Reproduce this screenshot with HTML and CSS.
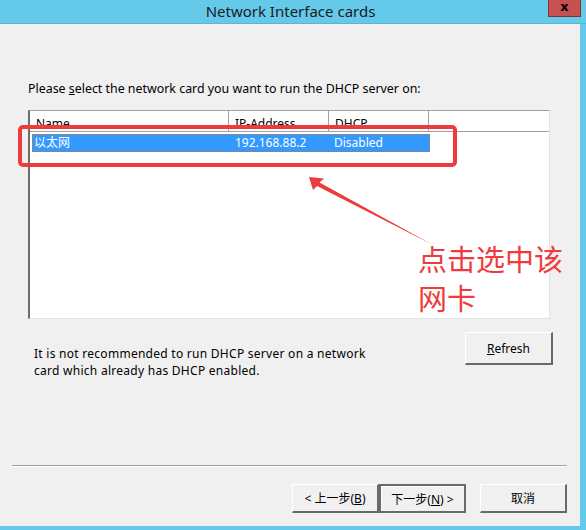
FILE: index.html
```html
<!DOCTYPE html>
<html>
<head>
<meta charset="utf-8">
<link rel="stylesheet" href="styles.css">
</head>
<body>
<div class="window">
  <div class="titlebar">
    <div class="title">Network Interface cards</div>
    <div class="close">x</div>
  </div>
  <div class="content">
    <p class="prompt">Please <u>s</u>elect the network card you want to run the DHCP server on:</p>
    <div class="listbox">
      <div class="lv-header">
        <div class="col c1">Name</div>
        <div class="col c2">IP-Address</div>
        <div class="col c3">DHCP</div>
        <div class="col c4"></div>
      </div>
      <div class="lv-row selected">
        <div class="cell c1 cjk">以太网</div>
        <div class="cell c2">192.168.88.2</div>
        <div class="cell c3">Disabled</div>
      </div>
    </div>
    <div class="info-row">
      <p class="note">It is not recommended to run DHCP server on a network<br>card which already has DHCP enabled.</p>
      <button class="btn refresh"><u>R</u>efresh</button>
    </div>
    <div class="separator"></div>
    <div class="nav">
      <button class="btn nav-btn cjk">&lt; 上一步(<u>B</u>)</button>
      <button class="btn nav-btn default cjk">下一步(<u>N</u>) &gt;</button>
      <button class="btn nav-btn cancel cjk">取消</button>
    </div>

    <div class="hl-box"></div>
    <svg class="arrow" width="586" height="530" viewBox="0 0 586 530">
      <polygon points="309,177 324,178.5 319.5,182.5 433,245 317,186 313,190" fill="#ef3b3b"/>
    </svg>
    <div class="annot cjk">点击选中该<br>网卡</div>
  </div>
</div>
</body>
</html>
```

FILE: styles.css
```css
* { box-sizing: border-box; }
html, body { margin: 0; padding: 0; }
body {
  width: 586px;
  height: 530px;
  background: #65c9ea;
  overflow: hidden;
  font-family: "Noto Sans", "Liberation Sans", sans-serif;
  font-size: 12px;
  color: #000;
}
.window { width: 586px; height: 530px; display: flex; flex-direction: column; }
.titlebar {
  height: 24px;
  position: relative;
  display: flex;
  justify-content: center;
  align-items: center;
  border-bottom: 1px solid #5ab6d4;
}
.title {
  font-family: "Noto Sans", sans-serif;
  font-size: 15px;
  color: #1b1b1b;
  padding-right: 5px;
  padding-bottom: 1px;
}
.close {
  position: absolute;
  left: 548px;
  top: 0;
  width: 33px;
  height: 17px;
  background: #c75050;
  border: 1px solid #7d3535;
  border-top: none;
  color: #000;
  font-family: "DejaVu Sans", sans-serif;
  font-weight: bold;
  font-size: 13px;
  line-height: 13px;
  text-align: center;
}
.content {
  position: relative;
  width: 580px;
  height: 502px;
  background: #f0f0f0;
  padding-top: 57px;
  display: flex;
  flex-direction: column;
}
.cjk { font-family: "Noto Sans", "Noto Sans CJK SC", sans-serif; }
.prompt {
  margin: 0 0 0 28px;
  line-height: 15px;
  height: 15px;
  font-size: 12.4px;
}
.listbox {
  margin: 14px 0 0 28px;
  width: 522px;
  height: 209px;
  background: #fff;
  border-top: 1px solid #a0a0a0;
  border-left: 2px solid #6d6d6d;
  border-right: 1px solid #e3e3e3;
  border-bottom: 1px solid #e3e3e3;
}
.lv-header {
  display: flex;
  height: 21px;
  border-bottom: 1px solid #a0a0a0;
  background: #fff;
}
.col {
  height: 20px;
  padding: 5px 0 0 6px;
  line-height: 15px;
  border-right: 1px solid #a0a0a0;
  box-shadow: 1px 0 0 #fff;
}
.c1 { width: 199px; }
.c2 { width: 100px; }
.c3 { width: 100px; }
.c4 { flex: 1; border-right: none; box-shadow: none; }
.lv-row {
  display: flex;
  margin: 2px 0 0 2px;
  width: 398px;
  height: 18px;
  line-height: 17px;
}
.lv-row.selected {
  background: #3399ff;
  color: #fff;
  outline: 1px dotted #c8742d;
  outline-offset: -1px;
}
.cell { padding-left: 2px; }
.lv-row .c1 { width: 205px; }
.lv-row .c2 { width: 101px; }
.info-row {
  display: flex;
  justify-content: space-between;
  margin: 13px 0 0 0;
  height: 33px;
}
.note {
  margin: 13px 0 0 34px;
  line-height: 17px;
  font-size: 12px;
  letter-spacing: 0.27px;
}
.btn {
  font-family: "Noto Sans", "Noto Sans CJK SC", sans-serif;
  font-size: 12px;
  color: #000;
  background: #f0f0f0;
  border-top: 1px solid #fff;
  border-left: 1px solid #fff;
  border-right: 2px solid #696969;
  border-bottom: 2px solid #696969;
  padding: 0;
  margin: 0;
}
.refresh {
  width: 88px;
  height: 33px;
  margin-right: 27px;
}
.separator {
  margin: 100px 0 0 12px;
  width: 555px;
  height: 2px;
  border-top: 1px solid #a0a0a0;
  border-bottom: 1px solid #fff;
}
.nav {
  display: flex;
  justify-content: flex-end;
  margin: 17px 13px 0 0;
  height: 29px;
}
.nav-btn { width: 87px; height: 29px; }
.nav-btn.default {
  border: 2px solid #6a6a6a;
  box-shadow: inset 1px 1px 0 #fff;
}
.nav-btn.cancel { margin-left: 14px; }
.hl-box {
  position: absolute;
  left: 18px;
  top: 101px;
  width: 439px;
  height: 42px;
  border: 4px solid #ef3b3b;
  border-radius: 5px;
}
.arrow {
  position: absolute;
  left: 0;
  top: -24px;
}
.annot {
  position: absolute;
  left: 418px;
  top: 215px;
  font-size: 29px;
  line-height: 39px;
  color: #ef3b3b;
  font-family: "Noto Sans CJK SC", sans-serif;
}
```
